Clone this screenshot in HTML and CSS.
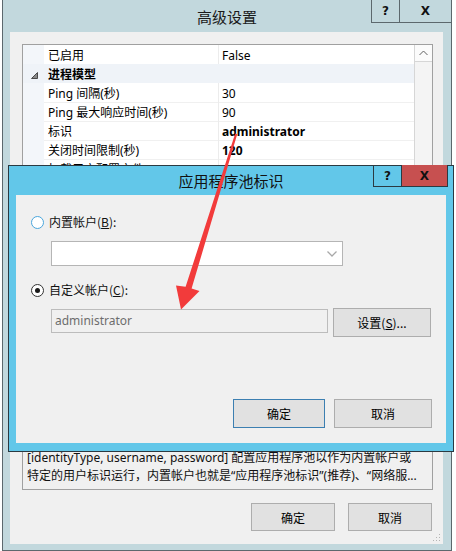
FILE: index.html
```html
<!DOCTYPE html>
<html>
<head>
<meta charset="utf-8">
<link rel="stylesheet" href="styles.css">
</head>
<body>
<div class="win">
  <div class="win-title">
    <span></span>
    <span class="win-title-text">高级设置</span>
    <div class="caps">
      <span class="cap cap-help">?</span>
      <span class="cap cap-close">X</span>
    </div>
  </div>
  <div class="win-body">
    <div class="content">
      <div class="pg">
        <div class="pg-main">
          <div class="pg-row"><span class="pg-m"></span><span class="pg-n">已启用</span><span class="pg-v">False</span></div>
          <div class="pg-row pg-cat"><span class="pg-m"><svg width="7" height="7" viewBox="0 0 7 7"><polygon points="6.5,0.5 6.5,6.5 0.5,6.5" fill="#8a8a8a" stroke="#4a4a4a" stroke-width="1"/></svg></span><span class="pg-n bold">进程模型</span><span class="pg-v"></span></div>
          <div class="pg-row"><span class="pg-m"></span><span class="pg-n">Ping 间隔(秒)</span><span class="pg-v">30</span></div>
          <div class="pg-row"><span class="pg-m"></span><span class="pg-n">Ping 最大响应时间(秒)</span><span class="pg-v">90</span></div>
          <div class="pg-row"><span class="pg-m"></span><span class="pg-n">标识</span><span class="pg-v bold">administrator</span></div>
          <div class="pg-row"><span class="pg-m"></span><span class="pg-n">关闭时间限制(秒)</span><span class="pg-v bold">120</span></div>
          <div class="pg-row"><span class="pg-m"></span><span class="pg-n">加载用户配置文件</span><span class="pg-v"></span></div>
          <div class="pg-fill"><span class="pg-m"></span></div>
        </div>
        <div class="pg-scroll">
          <div class="sb-up"><svg width="9" height="6" viewBox="0 0 9 6"><polyline points="0.5,5 4.5,1 8.5,5" fill="none" stroke="#606060" stroke-width="1"/></svg></div>
        </div>
      </div>
      <div class="desc">
        <div>[identityType, username, password] 配置应用程序池以作为内置帐户或</div>
        <div>特定的用户标识运行，内置帐户也就是“应用程序池标识”(推荐)、“网络服...</div>
      </div>
      <div class="btn-row outer-btns">
        <button class="btn btn-outer">确定</button>
        <button class="btn btn-outer">取消</button>
      </div>
      <div class="grip">
        <svg width="8" height="8" viewBox="0 0 8 8"><g fill="#b4b4b4"><rect x="6" y="0" width="1" height="1"/><rect x="3" y="3" width="1" height="1"/><rect x="6" y="3" width="1" height="1"/><rect x="0" y="6" width="1" height="1"/><rect x="3" y="6" width="1" height="1"/><rect x="6" y="6" width="1" height="1"/></g></svg>
      </div>
    </div>
  </div>
</div>

<div class="dlg">
  <div class="dlg-title">
    <span></span>
    <span class="dlg-title-text">应用程序池标识</span>
    <div class="dcaps">
      <span class="dcap dcap-help">?</span>
      <span class="dcap dcap-close">X</span>
    </div>
  </div>
  <div class="dlg-body">
    <div class="dlg-content">
      <label class="radio-row r1">
        <span class="radio radio-off"></span>
        <span>内置帐户(<u>B</u>):</span>
      </label>
      <div class="combo">
        <svg width="10" height="6" viewBox="0 0 10 6"><polyline points="0.5,0.5 5,5 9.5,0.5" fill="none" stroke="#a8a8a8" stroke-width="1.3"/></svg>
      </div>
      <label class="radio-row r2">
        <span class="radio radio-on"><span class="dot"></span></span>
        <span>自定义帐户(<u>C</u>):</span>
      </label>
      <div class="acct-row">
        <div class="tb">administrator</div>
        <button class="btn btn-set">设置(<u>S</u>)...</button>
      </div>
      <div class="btn-row dlg-btns">
        <button class="btn btn-ok">确定</button>
        <button class="btn btn-cancel">取消</button>
      </div>
    </div>
  </div>
</div>

<svg class="arrow" width="456" height="551" viewBox="0 0 456 551">
  <polygon points="235.2,133.6 237.2,134.3 191.6,288.6 199.5,291 181,309.5 176,285.6 185.6,286.8" fill="#f23b3b"/>
</svg>
</body>
</html>
```

FILE: styles.css
```css
* { box-sizing: border-box; }
html, body {
  margin: 0;
  padding: 0;
}
body {
  width: 456px;
  height: 551px;
  overflow: hidden;
  position: relative;
  background: #ffffff;
  font-family: "Segoe UI", "Noto Sans", "Noto Sans CJK SC", sans-serif;
  font-size: 12px;
  color: #000;
}
u { text-decoration: underline; text-underline-offset: 1px; }
.bold { font-weight: bold; }

/* ---- outer window ---- */
.win {
  margin-left: 2px;
  width: 450px;
  height: 551px;
  border: 1px solid #5c686d;
  border-top: none;
  background: #c2d8dd;
  display: flex;
  flex-direction: column;
}
.win-title {
  height: 32px;
  display: grid;
  grid-template-columns: 1fr auto 1fr;
  flex: none;
}
.win-title-text {
  align-self: center;
  font-family: "Noto Sans CJK SC", sans-serif;
  font-size: 15px;
  color: #1a1a1a;
  line-height: 20px;
  padding-top: 2px;
}
.caps {
  justify-self: end;
  align-self: start;
  display: flex;
  border-left: 1px solid #5c686d;
  border-bottom: 1px solid #5c686d;
}
.cap {
  height: 22px;
  display: flex;
  align-items: center;
  justify-content: center;
  font-family: "DejaVu Sans", sans-serif;
  font-weight: bold;
  font-size: 12px;
  color: #111;
}
.cap-help { width: 28px; border-right: 1px solid #5c686d; }
.cap-close { width: 51px; font-size: 12px; }

.win-body {
  flex: 1;
  padding: 0 8px 6px 7px;
  display: flex;
}
.content {
  flex: 1;
  background: #f0f0f0;
  padding: 12px 10px 0 12px;
  display: flex;
  flex-direction: column;
  position: relative;
}

/* property grid */
.pg {
  height: 397px;
  border: 1px solid #a0a0a0;
  background: #fff;
  display: flex;
  flex: none;
}
.pg-main {
  flex: 1;
  display: flex;
  flex-direction: column;
}
.pg-row {
  height: 19px;
  display: grid;
  grid-template-columns: 21px 175px 1fr;
  line-height: 16px;
  flex: none;
}
.pg-m {
  background: #f3f6fa;
  display: flex;
  align-items: center;
  justify-content: center;
}
.pg-n {
  padding-left: 4px;
  padding-top: 3px;
  border-right: 1px solid #ececec;
  border-bottom: 1px solid #f0f0f0;
  white-space: nowrap;
  overflow: hidden;
  font-family: "Noto Sans", "Noto Sans CJK SC", sans-serif;
}
.pg-v {
  padding-left: 3px;
  padding-top: 3px;
  border-bottom: 1px solid #f0f0f0;
  white-space: nowrap;
  font-family: "Noto Sans", "Noto Sans CJK SC", sans-serif;
}
.pg-cat, .pg-cat .pg-m { background: #eff3f8; }
.pg-cat .pg-n, .pg-cat .pg-v { border-color: transparent; }
.pg-cat .pg-n { border-right: none; }
.pg-cat .pg-m { justify-content: flex-end; padding-right: 6px; padding-top: 3px; }
.pg-fill {
  flex: 1;
  display: grid;
  grid-template-columns: 21px 1fr;
}
.pg-scroll {
  width: 18px;
  border-left: 1px solid #d6d6d6;
  background: #f4f4f4;
}
.sb-up {
  height: 17px;
  border-bottom: 1px solid #d6d6d6;
  background: #fbfbfb;
  display: flex;
  align-items: center;
  justify-content: center;
}

.desc {
  margin-top: 4px;
  height: 45px;
  border: 1px solid #a0a0a0;
  padding: 3px 4px 0 4px;
  line-height: 18px;
  white-space: nowrap;
  overflow: hidden;
  font-family: "Noto Sans", "Noto Sans CJK SC", sans-serif;
  color: #111;
}

.btn-row {
  display: flex;
  justify-content: flex-end;
}
.outer-btns {
  margin-top: 13px;
  gap: 13px;
  padding-right: 1px;
}
.btn {
  font-family: "Noto Sans CJK SC", sans-serif;
  font-size: 12px;
  background: #e1e1e1;
  border: 1px solid #adadad;
  color: #000;
  padding: 0;
  margin: 0;
}
.btn-outer { width: 84px; height: 28px; }
.grip {
  position: absolute;
  right: 2px;
  bottom: 2px;
  line-height: 0;
}

/* ---- dialog ---- */
.dlg {
  position: absolute;
  left: 8px;
  top: 165px;
  width: 446px;
  height: 287px;
  border: 1px solid #2b3a42;
  background: #62c7e9;
  display: flex;
  flex-direction: column;
  z-index: 5;
}
.dlg-title {
  height: 29px;
  display: grid;
  grid-template-columns: 1fr auto 1fr;
  flex: none;
}
.dlg-title-text {
  align-self: center;
  font-family: "Noto Sans CJK SC", sans-serif;
  font-size: 15px;
  line-height: 20px;
  padding-top: 1px;
  color: #111;
  white-space: nowrap;
}
.dcaps {
  justify-self: end;
  align-self: start;
  margin-right: 5px;
  margin-top: -1px;
  display: flex;
  border: 1px solid #2b3a42;
  border-top: none;
}
.dcap {
  height: 21px;
  display: flex;
  align-items: center;
  justify-content: center;
  font-family: "DejaVu Sans", sans-serif;
  font-weight: bold;
  font-size: 12px;
  color: #111;
}
.dcap-help { width: 28px; border-right: 1px solid #2b3a42; }
.dcap-close { width: 45px; background: #c75050; }

.dlg-body {
  flex: 1;
  padding: 0 7px 8px 7px;
  display: flex;
}
.dlg-content {
  flex: 1;
  background: #f0f0f0;
  padding: 0 14px 0 15px;
  display: flex;
  flex-direction: column;
  font-family: "Noto Sans CJK SC", sans-serif;
}
.radio-row {
  height: 16px;
  display: flex;
  align-items: center;
  gap: 5px;
  line-height: 16px;
  color: #111;
}
.r1 { margin-top: 19px; }
.r2 { margin-top: 16px; }
.radio {
  width: 13px;
  height: 13px;
  border-radius: 50%;
  background: #fff;
  display: flex;
  align-items: center;
  justify-content: center;
  flex: none;
}
.radio-off { border: 1px solid #4aa6dc; }
.radio-on { border: 1px solid #333; }
.dot {
  width: 5px;
  height: 5px;
  border-radius: 50%;
  background: #1a1a1a;
}
.combo {
  margin-top: 11px;
  margin-left: 20px;
  width: 292px;
  height: 25px;
  border: 1px solid #b5b5b5;
  background: #fff;
  display: flex;
  align-items: center;
  justify-content: flex-end;
  padding-right: 5px;
}
.acct-row {
  margin-top: 10px;
  margin-left: 20px;
  display: flex;
  align-items: flex-start;
  gap: 5px;
}
.tb {
  margin-top: 1px;
  width: 277px;
  height: 24px;
  border: 1px solid #bcbcbc;
  background: #f0f0f0;
  color: #6d6d6d;
  padding-left: 3px;
  line-height: 22px;
  font-family: "Noto Sans", sans-serif;
}
.btn-set { width: 98px; height: 29px; }
.dlg-btns {
  margin-top: 62px;
  gap: 9px;
}
.btn-ok { width: 92px; height: 29px; border-color: #3c7fb1; }
.btn-cancel { width: 98px; height: 29px; }

.arrow {
  position: absolute;
  left: 0;
  top: 0;
  z-index: 10;
  pointer-events: none;
}
```
